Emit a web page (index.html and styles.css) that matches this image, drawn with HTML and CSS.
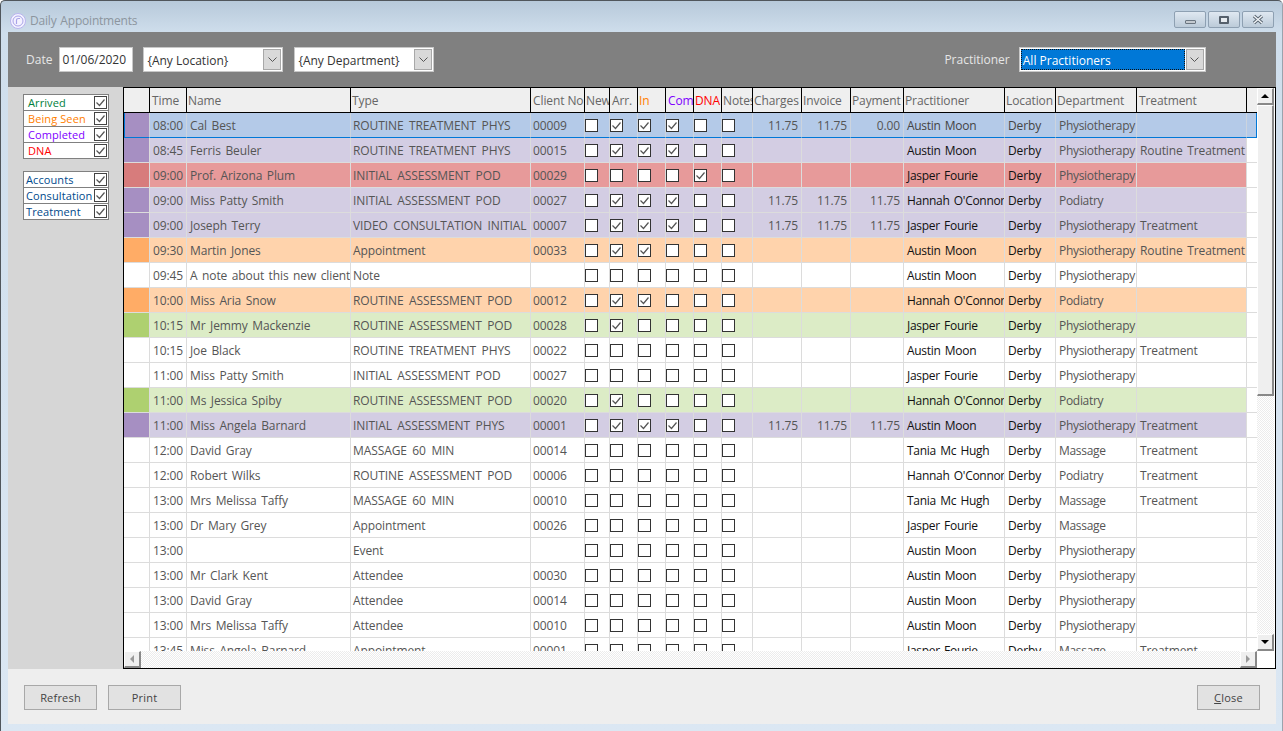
FILE: index.html
```html
<!DOCTYPE html>
<html lang="en">
<head>
<meta charset="utf-8">
<title>Daily Appointments</title>
<link rel="stylesheet" href="styles.css">
</head>
<body>
<div class="window">
  <div class="titlebar">
    <svg class="appicon" width="16" height="16" viewBox="0 0 16 16"><circle cx="8" cy="8" r="7.500" fill="#f4f2ff" stroke="#b9b4ee"/><circle cx="8" cy="8" r="5" fill="none" stroke="#a9a3e8"/><path d="M6.500 11V7q0-1.500 2-1.500h1.500" fill="none" stroke="#a9a3e8" stroke-width="1.200"/></svg>
    <span class="title">Daily Appointments</span>
    <div class="winbtns">
      <div class="winbtn"><i class="g-min"></i></div>
      <div class="winbtn"><i class="g-max"></i></div>
      <div class="winbtn"><svg width="14" height="11" viewBox="0 0 14 11"><path d="M3 2l8 7M11 2l-8 7" stroke="#5a6672" stroke-width="3.400" fill="none"/><path d="M3 2l8 7M11 2l-8 7" stroke="#f2f5f8" stroke-width="1.400" fill="none"/></svg></div>
    </div>
  </div>
  <div class="body">
    <div class="filterbar">
      <span class="lbl">Date</span>
      <div class="field date">01/06/2020</div>
      <div class="field combo loc"><span class="ctext">{Any Location}</span><span class="carrow"><svg width="9" height="5" viewBox="0 0 9 5"><path d="M.5.500l4 4 4-4" fill="none" stroke="#555"/></svg></span></div>
      <div class="field combo dep"><span class="ctext">{Any Department}</span><span class="carrow"><svg width="9" height="5" viewBox="0 0 9 5"><path d="M.5.500l4 4 4-4" fill="none" stroke="#555"/></svg></span></div>
      <span class="lbl prac">Practitioner</span>
      <div class="field combo pr"><span class="ctext sel">All Practitioners</span><span class="carrow"><svg width="9" height="5" viewBox="0 0 9 5"><path d="M.5.500l4 4 4-4" fill="none" stroke="#555"/></svg></span></div>
    </div>
    <div class="middle">
      <aside class="side" id="side"></aside>
      <div class="gridbox">
        <div class="gridtop">
          <div class="view"><table class="grid" id="grid"></table></div>
          <div class="vscroll">
            <div class="sbtn"><b class="up"></b></div>
            <div class="thumb"></div>
            <div class="strack"></div>
            <div class="sbtn"><b class="down"></b></div>
          </div>
        </div>
        <div class="hscroll">
          <div class="hbtn"><b class="left"></b></div>
          <div class="htrack"></div>
          <div class="hbtn"><b class="right"></b></div>
          <div class="corner"></div>
        </div>
      </div>
    </div>
    <div class="footer">
      <button class="btn">Refresh</button>
      <button class="btn">Print</button>
      <button class="btn close"><u>C</u>lose</button>
    </div>
  </div>
</div>
<script src="app.js"></script>
</body>
</html>
```
FILE: styles.css
```css
* { box-sizing: border-box; }
html, body { margin: 0; padding: 0; }
body { width: 1283px; height: 731px; overflow: hidden; background: #fff; font-family: "Open Sans", "Noto Sans", sans-serif; font-size: 12px; color: #555; }
.window { width: 1283px; height: 731px; display: flex; flex-direction: column; background: linear-gradient(#b7c9da 0, #cfdeec 32px, #dbe7f3 100%); border-top: 1px solid #50565c; border-left: 1px solid #50565c; border-right: 1px solid #9aa3ad; border-radius: 5px 5px 0 0; padding: 0 6px 7px 7px; }
.titlebar { height: 31px; display: flex; align-items: center; flex: none; padding-left: 2px; }
.appicon { flex: none; margin-top: 8px; }
.title { margin-left: 4px; margin-top: 8px; font-size: 12px; letter-spacing: -.2px; word-spacing: 1px; color: #8c959e; }
.winbtns { margin-left: auto; display: flex; gap: 2px; margin-right: 2px; margin-top: 6px; }
.winbtn { width: 32px; height: 17px; border: 1px solid #8ea0b2; border-radius: 2px; background: linear-gradient(#dfe8f1, #bccbd9); display: flex; align-items: center; justify-content: center; }
.g-min { display: block; width: 11px; height: 4px; margin-top: 4px; border: 1px solid #6a7580; background: #c4cad0; border-radius: 1px; }
.g-max { display: block; width: 10px; height: 8px; border: 2px solid #55606c; background: #e6ebf0; border-radius: 1px; }
.body { flex: 1; display: flex; flex-direction: column; min-height: 0; }
.filterbar { height: 55px; flex: none; background: #808080; display: flex; align-items: flex-start; padding: 15px 0 0 18px; color: #e4e4e4; }
.lbl { font-size: 12px; line-height: 26px; color: #e6e6e6; }
.field { height: 25px; background: #fff; color: #333; border: 1px solid #c8c8c8; line-height: 23px; }
.date { width: 74px; margin-left: 7px; padding-left: 2px; font-size: 12px; }
.combo { display: flex; padding: 1px; }
.ctext { flex: 1; padding-left: 2px; }
.carrow { width: 18px; flex: none; background: #d9d9d9; border: 1px solid #a8a8a8; display: flex; align-items: center; justify-content: center; }
.loc { width: 140px; margin-left: 10px; }
.dep { width: 140px; margin-left: 11px; }
.prac { margin-left: 510px; }
.pr { width: 187px; margin-left: 9px; }
.sel { background: #0078d7; color: #fff; outline: 1px dotted #111; outline-offset: -1px; margin-right: 1px; }
.middle { flex: 1; min-height: 0; display: flex; }
.side { width: 115px; flex: none; background: #d6d6d6; padding: 7px 0 0 15px; }
.group { width: 86px; border: 1px solid #808080; background: #808080; display: flex; flex-direction: column; gap: 1px; margin-bottom: 12px; }
.opt { height: 15px; background: #fff; display: flex; align-items: center; justify-content: space-between; padding: 0 1px 0 4px; font-size: 11px; white-space: nowrap; letter-spacing: .1px; }
.opt.tight { padding-left: 2px; }
.optbox { width: 13px; height: 13px; flex: none; border: 1px solid #444; background: #fff; display: flex; align-items: center; justify-content: center; }
.gridbox { flex: 1; min-width: 0; display: flex; flex-direction: column; border: 1px solid #000; background: #fff; }
.gridtop { flex: 1; min-height: 0; display: flex; }
.view { flex: 1; min-width: 0; overflow: hidden; }
.grid { border-collapse: separate; border-spacing: 0; table-layout: fixed; width: 1133px; letter-spacing: -.1px; word-spacing: 1.500px; }
.grid th { height: 25px; padding: 0 0 0 1px; background: #efefef; font-weight: 400; text-align: left; border-right: 1px solid #000; border-bottom: 1px solid #000; white-space: nowrap; overflow: hidden; color: #666; word-spacing: 0; }
.grid th.p2 { padding-left: 2px; }
.grid th.fill { border-right: 0; }
.grid td { height: 25px; padding: 0 0 0 3px; border-right: 1px solid #dcdcdc; border-bottom: 1px solid #dcdcdc; white-space: nowrap; overflow: hidden; color: #555; }
.grid td.type { padding-left: 2px; word-spacing: 2.500px; }
.grid td.client { padding-left: 2px; }
.grid td.narrow { letter-spacing: -.3px; }
.grid td.num { text-align: right; padding: 0 3px 0 0; }
.grid td.ck { padding: 0; }
.grid td.dark { color: #111; }
.grid td.fill { background: #fff; border-right: 0; padding: 0; }
.cb { display: block; width: 13px; height: 13px; border: 1px solid #333; background: #fff; }
.cb.on { display: flex; align-items: center; justify-content: center; }
.h-in { color: #ff8000 !important; }
.h-com { color: #8000ff !important; }
.h-dna { color: #f00 !important; }
.purple td { background: #d3cde3; }
.purple td.key { background: #a68fc2; }
.red td { background: #e79a9a; }
.red td.key { background: #d77c7c; }
.orange td { background: #ffd3ac; }
.orange td.key { background: #ffac66; }
.green td { background: #dcecc6; }
.green td.key { background: #aed070; }
.sel-row td { background: #b4cae8; border-color: #ccd4de; border-bottom-color: #0078d7; }
.sel-row td.key { background: #a68fc2; box-shadow: inset 1px 0 0 #0078d7; }
.sel-row td.dark { color: #444; }
.sel-row td.fill { background: #b4cae8; border-right: 1px solid #0078d7; }
.vscroll { width: 18px; flex: none; display: flex; flex-direction: column; background: #fff; padding-right: 1px; }
.sbtn { height: 17px; background: #efefef; border: 1px solid #fff; border-right: 2px solid #888; border-bottom: 2px solid #888; display: flex; align-items: center; justify-content: center; flex: none; }
.thumb { height: 291px; background: #efefef; border-right: 2px solid #888; border-bottom: 2px solid #888; border-left: 1px solid #fff; border-top: 1px solid #fff; flex: none; }
.strack { flex: 1; background-color: #fff; background-image: repeating-conic-gradient(#ececec 0 25%, #fff 0 50%); background-size: 2px 2px; }
.up { border: 4px solid transparent; border-top: 0; border-bottom: 4px solid #000; }
.down { border: 4px solid transparent; border-bottom: 0; border-top: 4px solid #000; }
.hscroll { height: 17px; flex: none; display: flex; }
.hbtn { width: 17px; height: 17px; flex: none; background: #efefef; border-right: 2px solid #888; border-bottom: 2px solid #888; border-top: 1px solid #fff; border-left: 1px solid #fff; display: flex; align-items: center; justify-content: center; }
.left { border: 4px solid transparent; border-left: 0; border-right: 4px solid #999; }
.right { border: 4px solid transparent; border-right: 0; border-left: 4px solid #999; }
.htrack { flex: 1; background-image: repeating-conic-gradient(#ececec 0 25%, #fff 0 50%); background-size: 2px 2px; }
.corner { width: 18px; flex: none; background: #fff; }
.footer { height: 55px; flex: none; background: #eeeeee; display: flex; align-items: flex-start; gap: 11px; padding: 16px 16px 0 16px; }
.btn { width: 73px; height: 25px; background: #e2e2e2; border: 1px solid #a8a8a8; font: 11px "Open Sans", "Noto Sans", sans-serif; letter-spacing: .2px; color: #444; padding: 0; }
.close { width: 63px; margin-left: auto; }
```
FILE: app.js
```js
var cols=[26,37,164,180,54,25,28,28,28,28,31,49,49,53,101,51,81,110,10];
var heads=[[""],["Time","p2"],["Name"],["Type"],["Client No","p2"],["New"],["Arr.","p2"],["In","h-in"],["Comp","h-com p2"],["DNA","h-dna"],["Notes"],["Charges"],["Invoice"],["Payment"],["Practitioner"],["Location"],["Department"],["Treatment","p2"],["","fill"]];
var P="Physiotherapy",R="Routine Treatment",T="Treatment";
var rows=[
["sel-row purple","08:00","Cal Best","ROUTINE TREATMENT PHYS","00009","011100",["11.75","11.75","0.00"],"Austin Moon",P,""],
["purple","08:45","Ferris Beuler","ROUTINE TREATMENT PHYS","00015","011100",[],"Austin Moon",P,R],
["red","09:00","Prof. Arizona Plum","INITIAL ASSESSMENT POD","00029","000010",[],"Jasper Fourie",P,""],
["purple","09:00","Miss Patty Smith","INITIAL ASSESSMENT POD","00027","011100",["11.75","11.75","11.75"],"Hannah O'Connor","Podiatry",""],
["purple","09:00","Joseph Terry","VIDEO CONSULTATION INITIAL","00007","011100",["11.75","11.75","11.75"],"Jasper Fourie",P,T],
["orange","09:30","Martin Jones","Appointment","00033","011000",[],"Austin Moon",P,R],
["","09:45","A note about this new client","Note","","000000",[],"Austin Moon",P,""],
["orange","10:00","Miss Aria Snow","ROUTINE ASSESSMENT POD","00012","011000",[],"Hannah O'Connor","Podiatry",""],
["green","10:15","Mr Jemmy Mackenzie","ROUTINE ASSESSMENT POD","00028","010000",[],"Jasper Fourie",P,""],
["","10:15","Joe Black","ROUTINE TREATMENT PHYS","00022","000000",[],"Austin Moon",P,T],
["","11:00","Miss Patty Smith","INITIAL ASSESSMENT POD","00027","000000",[],"Jasper Fourie",P,""],
["green","11:00","Ms Jessica Spiby","ROUTINE ASSESSMENT POD","00020","010000",[],"Hannah O'Connor","Podiatry",""],
["purple","11:00","Miss Angela Barnard","INITIAL ASSESSMENT PHYS","00001","011100",["11.75","11.75","11.75"],"Austin Moon",P,T],
["","12:00","David Gray","MASSAGE 60 MIN","00014","000000",[],"Tania Mc Hugh","Massage",T],
["","12:00","Robert Wilks","ROUTINE ASSESSMENT POD","00006","000000",[],"Hannah O'Connor","Podiatry",T],
["","13:00","Mrs Melissa Taffy","MASSAGE 60 MIN","00010","000000",[],"Tania Mc Hugh","Massage",T],
["","13:00","Dr Mary Grey","Appointment","00026","000000",[],"Jasper Fourie","Massage",""],
["","13:00","","Event","","000000",[],"Austin Moon",P,""],
["","13:00","Mr Clark Kent","Attendee","00030","000000",[],"Austin Moon",P,""],
["","13:00","David Gray","Attendee","00014","000000",[],"Austin Moon",P,""],
["","13:00","Mrs Melissa Taffy","Attendee","00010","000000",[],"Austin Moon",P,""],
["","13:45","Miss Angela Barnard","Appointment","00001","000000",[],"Jasper Fourie","Massage",T]
];
var tick='<svg width="11" height="11" viewBox="0 0 11 11"><path d="M1.500 5.500l3 3 5-6" fill="none" stroke="#555" stroke-width="1.200"/></svg>';
function cb(on){return on?'<span class="cb on">'+tick+'</span>':'<span class="cb"></span>';}
var h='<colgroup>'+cols.map(function(c){return '<col style="width:'+c+'px">';}).join('')+'</colgroup><thead><tr>';
heads.forEach(function(x){h+='<th'+(x[1]?' class="'+x[1]+'"':'')+'>'+x[0]+'</th>';});
h+='</tr></thead><tbody>';
rows.forEach(function(r){
  h+='<tr class="'+r[0]+'"><td class="key"></td><td>'+r[1]+'</td><td>'+r[2]+'</td><td class="type">'+r[3]+'</td><td class="client">'+r[4]+'</td>';
  r[5].split('').forEach(function(v){h+='<td class="ck">'+cb(v==='1')+'</td>';});
  for(var i=0;i<3;i++){h+='<td class="num">'+(r[6][i]||'')+'</td>';}
  h+='<td class="dark narrow">'+r[7]+'</td><td class="dark">Derby</td><td class="narrow">'+r[8]+'</td><td>'+r[9]+'</td><td class="fill"></td></tr>';
});
document.getElementById('grid').innerHTML=h+'</tbody>';
var groups=[[["Arrived","#00803c"],["Being Seen","#ff8000"],["Completed","#8000ff"],["DNA","#f00"]],[["Accounts","#004a8c"],["Consultation","#004a8c"],["Treatment","#004a8c"]]];
document.getElementById('side').innerHTML=groups.map(function(g,gi){return '<div class="group">'+g.map(function(o){return '<label class="opt'+(gi?' tight':'')+'"><span class="otext" style="color:'+o[1]+'">'+o[0]+'</span><span class="optbox">'+tick+'</span></label>';}).join('')+'</div>';}).join('');
```
